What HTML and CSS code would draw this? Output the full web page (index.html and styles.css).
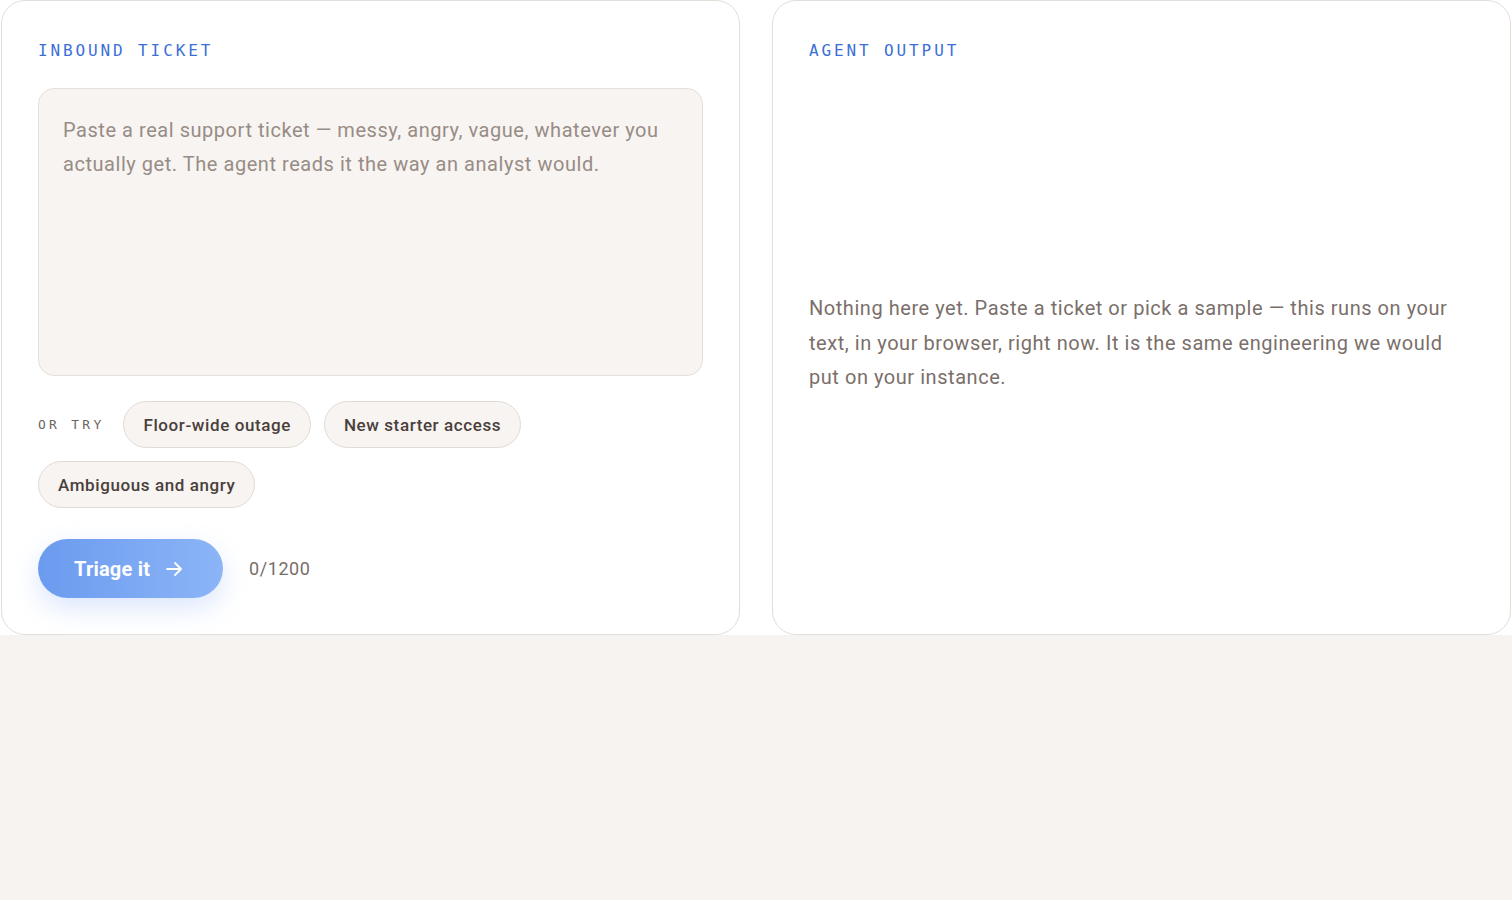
FILE: index.html
```html
<!DOCTYPE html>
<html lang="en">
<head>
  <meta charset="UTF-8">
  <title>Ticket Triage</title>
  <link rel="stylesheet" href="styles.css">
</head>
<body>
  <section class="triage">
    <!-- Input side -->
    <div class="panel">
      <h2 class="panel-label">Inbound ticket</h2>
      <textarea class="ticket-input" maxlength="1200" placeholder="Paste a real support ticket — messy, angry, vague, whatever you actually get. The agent reads it the way an analyst would."></textarea>
      <div class="samples">
        <span class="samples-label">Or try</span>
        <button class="chip">Floor-wide outage</button>
        <button class="chip">New starter access</button>
        <button class="chip">Ambiguous and angry</button>
      </div>
      <div class="actions">
        <button class="triage-btn" disabled>
          Triage it
          <svg class="arrow" width="18" height="18" viewBox="0 0 18 18" fill="none" stroke="currentColor" stroke-width="1.8" stroke-linecap="round" stroke-linejoin="round">
            <path d="M2 9h14M10 3l6 6-6 6"/>
          </svg>
        </button>
        <span class="counter">0/1200</span>
      </div>
    </div>

    <!-- Output side -->
    <div class="panel output">
      <h2 class="panel-label">Agent output</h2>
      <div class="output-body">
        <p class="empty-note">Nothing here yet. Paste a ticket or pick a sample — this runs on your text, in your browser, right now. It is the same engineering we would put on your instance.</p>
      </div>
    </div>
  </section>
</body>
</html>
```

FILE: styles.css
```css
body {
  margin: 0;
  background-color: #f7f3f0;
  font-family: 'Roboto', 'Liberation Sans', sans-serif;
  letter-spacing: 0.034em;
  color: #4a403b;
}

.triage {
  display: grid;
  grid-template-columns: 1fr 1fr;
  gap: 32px;
  padding: 0 1px;
  background: #ffffff;
}

.panel {
  display: flex;
  flex-direction: column;
  border: 1px solid #e3ded9;
  border-radius: 24px;
  padding: 36px;
  background: #ffffff;
}

.panel-label {
  margin: 0 0 23px 0;
  font-family: 'DejaVu Sans Mono', 'Liberation Mono', monospace;
  font-size: 16px;
  font-weight: normal;
  line-height: 28px;
  letter-spacing: 0.18em;
  text-transform: uppercase;
  color: #3b6fd6;
}

.ticket-input {
  box-sizing: border-box;
  height: 288px;
  width: 100%;
  margin: 0;
  padding: 24px;
  resize: none;
  border: 1px solid #e6e0da;
  border-radius: 16px;
  background: #f7f4f1;
  font-family: inherit;
  font-size: 20px;
  letter-spacing: inherit;
  line-height: 34px;
  color: #4a403b;
  outline: none;
}

.ticket-input::placeholder {
  color: #978c86;
}

.samples {
  display: flex;
  flex-wrap: wrap;
  align-items: center;
  gap: 13px;
  margin-top: 25px;
}

.samples-label {
  margin-right: 6px;
  font-family: 'DejaVu Sans Mono', 'Liberation Mono', monospace;
  font-size: 13px;
  letter-spacing: 0.25em;
  text-transform: uppercase;
  color: #6d6560;
}

.chip {
  height: 47px;
  padding: 0 19px;
  border: 1px solid #e2dbd5;
  border-radius: 999px;
  background: #f7f4f1;
  font-family: inherit;
  font-size: 17px;
  font-weight: 500;
  letter-spacing: 0.035em;
  color: #4a403b;
  cursor: pointer;
}

.actions {
  display: flex;
  align-items: center;
  gap: 26px;
  margin-top: 31px;
}

.triage-btn {
  display: flex;
  align-items: center;
  gap: 15px;
  height: 59px;
  padding: 0 40px 0 36px;
  border: none;
  border-radius: 999px;
  background: linear-gradient(90deg, #6b9bef, #8cb5f7);
  box-shadow: 0 10px 26px rgba(90, 140, 240, 0.22);
  font-family: inherit;
  font-size: 20px;
  font-weight: 700;
  letter-spacing: 0.01em;
  color: #ffffff;
  cursor: pointer;
}

.counter {
  font-size: 18px;
  color: #776d68;
}

.output-body {
  flex: 1;
  display: flex;
  align-items: center;
}

.empty-note {
  margin: 0;
  font-size: 20px;
  line-height: 34.5px;
  color: #7a6f6a;
}
```
